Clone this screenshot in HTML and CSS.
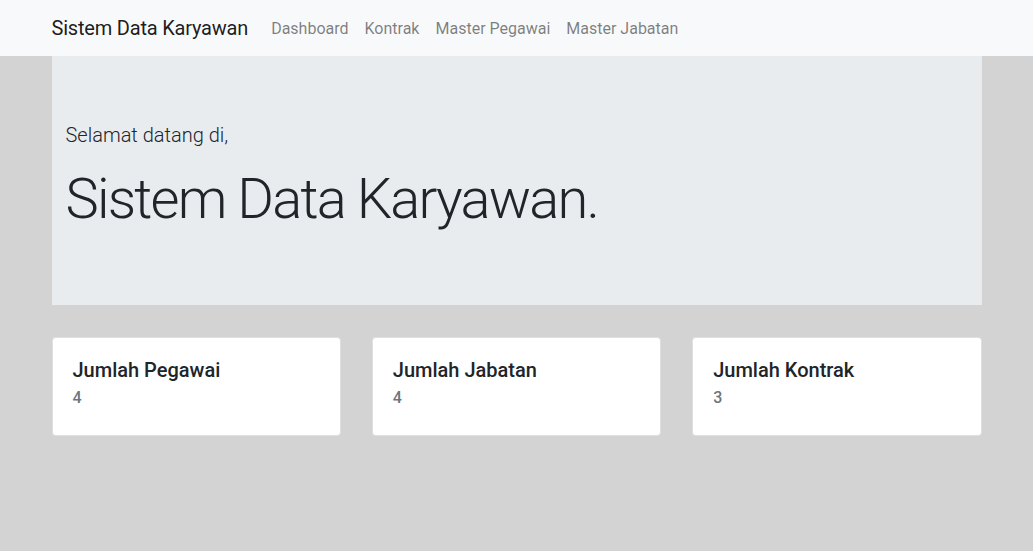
FILE: index.html
```html
<!DOCTYPE html>
<html lang="id">
<head>
<meta charset="utf-8">
<title>Sistem Data Karyawan</title>
<link rel="stylesheet" href="styles.css">
</head>
<body>
<nav class="navbar">
  <div class="container nav-inner">
    <a class="brand" href="#">Sistem Data Karyawan</a>
    <ul class="nav-links">
      <li><a href="#">Dashboard</a></li>
      <li><a href="#">Kontrak</a></li>
      <li><a href="#">Master Pegawai</a></li>
      <li><a href="#">Master Jabatan</a></li>
    </ul>
  </div>
</nav>
<main class="container">
  <section class="jumbotron">
    <p class="lead">Selamat datang di,</p>
    <h1 class="display">Sistem Data Karyawan.</h1>
  </section>
  <div class="cards">
    <div class="card">
      <h5 class="card-title">Jumlah Pegawai</h5>
      <h6 class="card-value">4</h6>
    </div>
    <div class="card">
      <h5 class="card-title">Jumlah Jabatan</h5>
      <h6 class="card-value">4</h6>
    </div>
    <div class="card">
      <h5 class="card-title">Jumlah Kontrak</h5>
      <h6 class="card-value">3</h6>
    </div>
  </div>
</main>
</body>
</html>
```
FILE: styles.css
```css
* { box-sizing: border-box; }
html, body { margin: 0; }
body {
  background: #d3d3d3;
  font-family: Roboto, "Liberation Sans", sans-serif;
  font-size: 16px;
  line-height: 1.5;
  color: #212529;
}
.container {
  width: 960px;
  margin: 0 auto;
  padding: 0 15px;
}
.navbar {
  background: #f8f9fa;
  padding: 8px 0;
}
.nav-inner {
  display: flex;
  align-items: center;
}
.brand {
  font-size: 20px;
  line-height: 30px;
  padding: 5px 0;
  margin-right: 15px;
  color: rgba(0,0,0,.9);
  text-decoration: none;
  letter-spacing: -0.2px;
}
.nav-links {
  display: flex;
  list-style: none;
  margin: 0;
  padding: 0;
}
.nav-links a {
  display: block;
  padding: 9px 8px 7px;
  color: rgba(0,0,0,.5);
  text-decoration: none;
}
.jumbotron {
  background: #e9ecef;
  padding: 64px 14px;
  margin-bottom: 32px;
}
.lead {
  font-size: 20px;
  font-weight: 300;
  line-height: 30px;
  margin: 0 0 16px;
}
.display {
  font-size: 56px;
  font-weight: 300;
  line-height: 1.2;
  margin: 0 0 8px;
  letter-spacing: -1.8px;
}
.cards {
  display: grid;
  grid-template-columns: repeat(3, 1fr);
  gap: 31px;
}
.card {
  background: #fff;
  border: 1px solid rgba(0,0,0,.125);
  border-radius: 4px;
  padding: 20px 20px 28px;
}
.card-title {
  font-size: 20px;
  font-weight: 500;
  line-height: 1.2;
  margin: 0 0 6px;
}
.card-value {
  font-size: 16px;
  font-weight: 500;
  line-height: 1.2;
  margin: 0;
  color: #6c757d;
}
```
